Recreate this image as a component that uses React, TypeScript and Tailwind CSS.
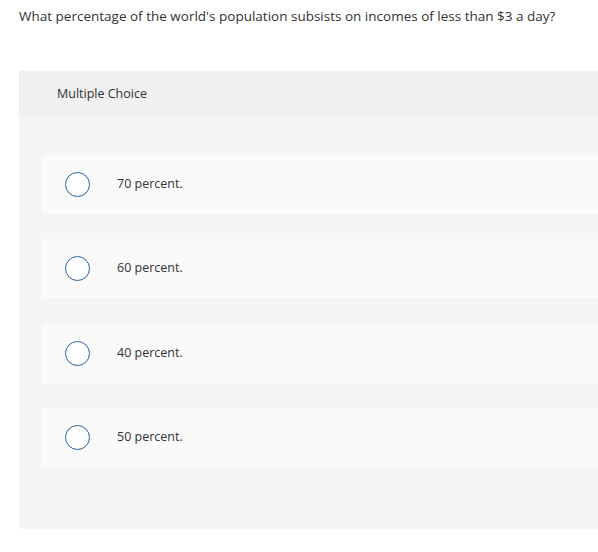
import React from "react";

const options = ["70 percent.", "60 percent.", "40 percent.", "50 percent."];

export default function App() {
  return (
    <div
      className="w-[598px] h-[552px] overflow-hidden bg-white text-[#333333]"
      style={{ fontFamily: "'Open Sans', Arial, sans-serif" }}
    >
      <p className="pl-[19px] pt-[7px] text-[13.5px] leading-[18px] whitespace-nowrap">
        What percentage of the world's population subsists on incomes of less than $3 a day?
      </p>
      <div className="ml-[19px] mt-[46px] w-[600px] rounded-[3px] bg-[#f5f5f5] overflow-hidden">
        <div className="h-[46px] bg-[#f0f0f0] flex items-center pl-[38px] text-[12.5px]">
          Multiple Choice
        </div>
        <div className="pt-[38px] pb-[62px] pl-[23px] flex flex-col gap-[25.33px]">
          {options.map((o) => (
            <div
              key={o}
              className="h-[59px] rounded-[3px] bg-[#fafafa] flex items-center pl-[23px]"
            >
              <span className="w-[25px] h-[25px] rounded-full border-[1.5px] border-[#2b6097] bg-white shrink-0" />
              <span className="ml-[27px] text-[12.5px]">{o}</span>
            </div>
          ))}
        </div>
      </div>
    </div>
  );
}
